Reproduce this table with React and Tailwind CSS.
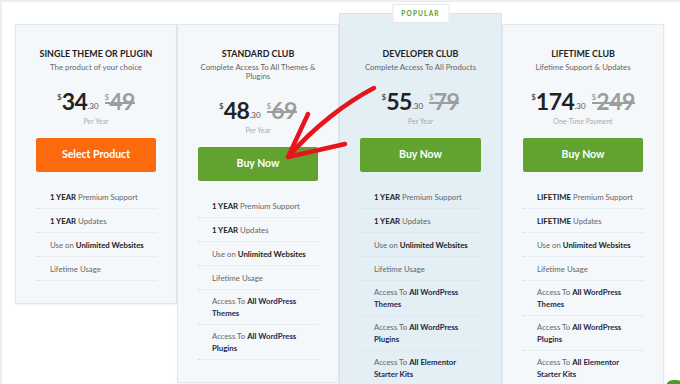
import React from 'react';

const themes = [[['t', 'Access To '], ['b', 'All '], ['n', 'WordPress']], [['n', 'Themes']]];
const plugins = [[['t', 'Access To '], ['b', 'All '], ['n', 'WordPress']], [['n', 'Plugins']]];
const kits = [[['t', 'Access To '], ['b', 'All '], ['n', 'Elementor']], [['n', 'Starter Kits']]];

const plans = [
  {
    title: 'Single Theme or Plugin',
    sub: ['The product of your choice'],
    price: '34',
    old: '49',
    term: 'Per Year',
    cta: 'Select Product',
    orange: true,
    features: [
      [[['b', '1 YEAR'], ['t', ' Premium Support']]],
      [[['b', '1 YEAR'], ['t', ' Updates']]],
      [[['t', 'Use on '], ['b', 'Unlimited Websites']]],
      [[['t', 'Lifetime Usage']]],
    ],
  },
  {
    title: 'Standard Club',
    sub: ['Complete Access To All Themes &', 'Plugins'],
    price: '48',
    old: '69',
    term: 'Per Year',
    cta: 'Buy Now',
    features: [
      [[['b', '1 YEAR'], ['t', ' Premium Support']]],
      [[['b', '1 YEAR'], ['t', ' Updates']]],
      [[['t', 'Use on '], ['b', 'Unlimited Websites']]],
      [[['t', 'Lifetime Usage']]],
      themes,
      plugins,
    ],
  },
  {
    title: 'Developer Club',
    sub: ['Complete Access To All Products'],
    price: '55',
    old: '79',
    term: 'Per Year',
    cta: 'Buy Now',
    popular: true,
    features: [
      [[['b', '1 YEAR'], ['t', ' Premium Support']]],
      [[['b', '1 YEAR'], ['t', ' Updates']]],
      [[['t', 'Use on '], ['b', 'Unlimited Websites']]],
      [[['t', 'Lifetime Usage']]],
      themes,
      plugins,
      kits,
    ],
  },
  {
    title: 'Lifetime Club',
    sub: ['Lifetime Support & Updates'],
    price: '174',
    old: '249',
    term: 'One-Time Payment',
    cta: 'Buy Now',
    features: [
      [[['b', 'LIFETIME'], ['t', ' Premium Support']]],
      [[['b', 'LIFETIME'], ['t', ' Updates']]],
      [[['t', 'Use on '], ['b', 'Unlimited Websites']]],
      [[['t', 'Lifetime Usage']]],
      themes,
      plugins,
      kits,
    ],
  },
];

function Feature({ lines }) {
  return (
    <li className="flex min-h-[24px] flex-col justify-center border-b border-dotted border-[#d9e0e6] py-[5px] pl-[14px] pr-[6px] text-[7.8px] leading-[12px] text-[#666]">
      {lines.map((parts, j) => (
        <div key={j} className="whitespace-nowrap">
          {parts.map(([k, s], i) =>
            k === 't' ? (
              <span key={i}>{s}</span>
            ) : (
              <span key={i} className={k === 'n' ? 'font-bold text-[#1f2a4d]' : 'font-bold text-[#222]'}>
                {s}
              </span>
            )
          )}
        </div>
      ))}
    </li>
  );
}

function Card({ plan }) {
  return (
    <div
      className={
        plan.popular
          ? 'relative w-[163px] shrink-0 self-start border border-[#d6e3ec] bg-[#e3eef5] px-[20px] pt-[34px] pb-[22px]'
          : 'mt-[11px] w-[162px] shrink-0 self-start border border-[#e1e8ed] bg-[#f5f8fa] px-[20px] pt-[23px] pb-[22px] shadow-[0_1px_2px_rgba(0,0,0,0.06)]'
      }
    >
      {plan.popular && (
        <div className="absolute left-1/2 top-[-10px] flex h-[19px] w-[57px] -translate-x-1/2 items-center justify-center border border-[#e2e8ec] bg-white text-[6.5px] font-bold tracking-[0.18em] text-[#5b9a2e]">
          POPULAR
        </div>
      )}
      <div className="text-center text-[8.9px] font-bold uppercase leading-[12px] text-[#222]">{plan.title}</div>
      <div className="mt-[3px] text-center text-[7.8px] leading-[9px] text-[#666]">
        {plan.sub.map((s, i) => (
          <div key={i}>{s}</div>
        ))}
      </div>
      <div className="mt-[16px] flex items-start justify-center">
        <span className="mt-[3px] text-[8px] font-semibold text-[#444]">$</span>
        <span className="text-[23px] font-bold leading-[26px] tracking-[-0.02em] text-[#222]">{plan.price}</span>
        <span className="mt-[12px] text-[8px] text-[#555]">.30</span>
        <span className="relative ml-[6px] flex items-start text-[#9d9d9d]">
          <span className="mt-[3px] text-[8px] font-semibold">$</span>
          <span className="text-[23px] font-bold leading-[26px] tracking-[-0.02em]">{plan.old}</span>
          <span className="absolute left-0 right-0 top-[14px] h-[2px] bg-[#9d9d9d]" />
        </span>
      </div>
      <div className="mt-[3px] text-center text-[7px] leading-[8px] text-[#aaa]">{plan.term}</div>
      <div
        className={
          'mt-[13px] flex h-[34px] items-center justify-center rounded-[2px] text-[10.5px] font-bold text-white ' +
          (plan.orange ? 'bg-[#fc6a0d]' : 'bg-[#62a231]')
        }
      >
        {plan.cta}
      </div>
      <ul className="mt-[13px]">
        {plan.features.map((f, i) => (
          <Feature key={i} lines={f} />
        ))}
      </ul>
    </div>
  );
}

export default function App() {
  return (
    <div
      className="relative h-[384px] w-[680px] overflow-hidden border-l-[2px] border-t-[2px] border-[#eeeeee] bg-white"
      style={{ fontFamily: 'Lato, "Open Sans", sans-serif' }}
    >
      <div className="flex items-start pl-[13px] pt-[11px]">
        {plans.map((p) => (
          <Card key={p.title} plan={p} />
        ))}
      </div>

      <svg className="pointer-events-none absolute left-0 top-0" width="680" height="384" viewBox="0 0 680 384">
        <path d="M372 86 C 345 100, 312 125, 287 154" fill="none" stroke="#e8141b" strokeWidth="4.5" strokeLinecap="round" />
        <path d="M306 112 L 286 155 L 343 142" fill="none" stroke="#e8141b" strokeWidth="4.5" strokeLinecap="round" strokeLinejoin="round" />
      </svg>

      <div className="absolute bottom-[-10px] right-[-4px] h-[14px] w-[18px] rounded-full bg-[#4f9a2a]" />
    </div>
  );
}
